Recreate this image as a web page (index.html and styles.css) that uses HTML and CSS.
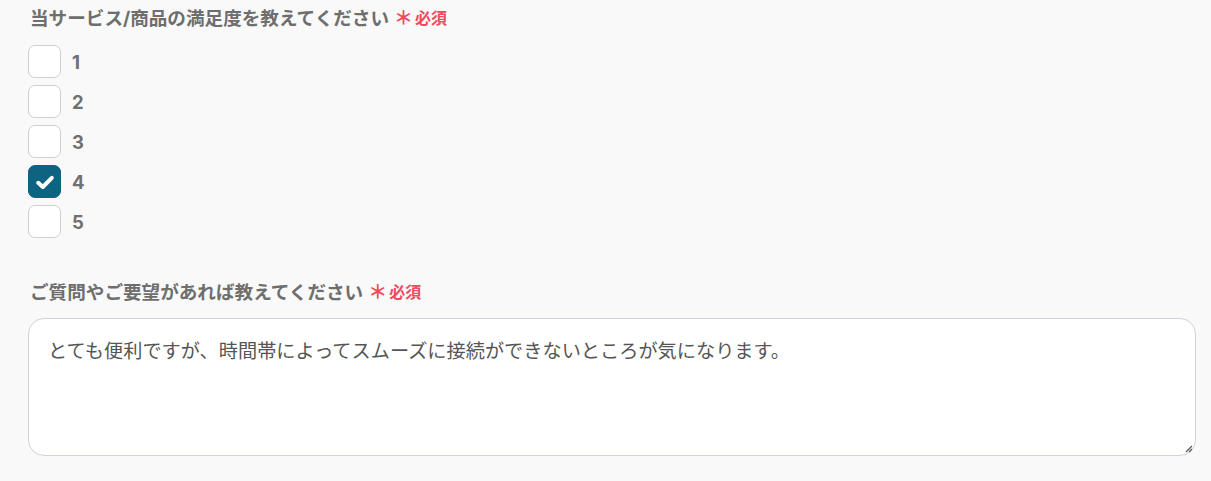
FILE: index.html
```html
<!DOCTYPE html>
<html lang="ja">
<head>
<meta charset="utf-8">
<link rel="stylesheet" href="styles.css">
</head>
<body>
<div class="form">
  <div class="field">
    <div class="label">当サービス/商品の満足度を教えてください<span class="ast">＊</span><span class="req">必須</span></div>
    <div class="options">
      <label class="opt"><span class="box"></span><span class="num">1</span></label>
      <label class="opt"><span class="box"></span><span class="num">2</span></label>
      <label class="opt"><span class="box"></span><span class="num">3</span></label>
      <label class="opt"><span class="box checked"><svg width="22" height="22" viewBox="0 0 22 22"><path d="M4.2 11.8 L8.8 16 L17.8 6.8" fill="none" stroke="#fff" stroke-width="4" stroke-linecap="round" stroke-linejoin="round"/></svg></span><span class="num">4</span></label>
      <label class="opt"><span class="box"></span><span class="num">5</span></label>
    </div>
  </div>
  <div class="field field2">
    <div class="label">ご質問やご要望があれば教えてください<span class="ast">＊</span><span class="req">必須</span></div>
    <div class="textarea">とても便利ですが、時間帯によってスムーズに接続ができないところが気になります。<svg class="grip" width="10" height="10" viewBox="0 0 10 10"><path d="M9 3 L3 9 M9 6 L6 9" stroke="#555" stroke-width="1.2"/></svg></div>
  </div>
</div>
</body>
</html>
```
FILE: styles.css
```css
html, body {
  margin: 0;
  padding: 0;
  background: #f9f9f9;
}
body {
  font-family: "Inter", "Noto Sans CJK JP", sans-serif;
  color: #666;
}
.form {
  padding: 5px 15px 0 28px;
}
.label {
  font-family: "Inter", "Noto Sans CJK JP", sans-serif;
  font-weight: 700;
  font-size: 18.6px;
  line-height: 27px;
  color: #6e6e6e;
  padding-left: 2px;
  display: flex;
  align-items: center;
}
.ast {
  color: #f04a5c;
  font-size: 19px;
  margin-left: 5px;
  font-weight: 700;
}
.req {
  color: #f04a5c;
  font-size: 16px;
  font-weight: 700;
  margin-left: 2px;
}
.options {
  display: flex;
  flex-direction: column;
  gap: 7px;
  margin-top: 13px;
}
.opt {
  display: flex;
  align-items: center;
  height: 33px;
}
.box {
  width: 31px;
  height: 31px;
  border: 1px solid #cfcfcf;
  border-radius: 7px;
  background: #fff;
  display: flex;
  align-items: center;
  justify-content: center;
}
.box.checked {
  background: #0e6480;
  border-color: #0e6480;
}
.num {
  font-family: "Inter", sans-serif;
  font-weight: 700;
  font-size: 18.5px;
  color: #707070;
  margin-left: 11px;
}
.field2 {
  margin-top: 41px;
}
.textarea {
  position: relative;
  margin-top: 12px;
  height: 138px;
  box-sizing: border-box;
  border: 1px solid #d2d2da;
  border-radius: 16px;
  background: #fff;
  padding: 17px 19px;
  font-family: "Noto Sans CJK JP", sans-serif;
  font-size: 19.2px;
  line-height: 28px;
  color: #555;
}
.grip {
  position: absolute;
  right: 2px;
  bottom: 2px;
}
```
